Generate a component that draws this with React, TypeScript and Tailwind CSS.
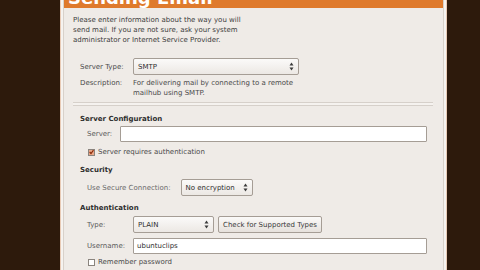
import React from "react";

const font = { fontFamily: '"DejaVu Sans", "Liberation Sans", sans-serif' };

function Spin() {
  return (
    <svg width="5" height="9" viewBox="0 0 5 9" className="shrink-0">
      <path d="M2.5 0.5 L4.5 3.5 L0.5 3.5 Z" fill="#3a3a3a" />
      <path d="M2.5 8.5 L4.5 5.5 L0.5 5.5 Z" fill="#3a3a3a" />
    </svg>
  );
}

function Combo({ value, w }: { value: string; w: string }) {
  return (
    <div className={`${w} h-[17px] flex items-center justify-between rounded-[2px] border border-[#a59d95] bg-gradient-to-b from-[#fbfaf9] to-[#ece8e4] pl-[4px] pr-[4px] text-[#2e2e2e]`}>
      <span>{value}</span>
      <Spin />
    </div>
  );
}

function Check({ checked, label }: { checked?: boolean; label: string }) {
  return (
    <div className="flex items-center gap-[3px] pl-[15px]">
      <div className={`w-[7px] h-[7px] border border-[#8a847e] flex items-center justify-center ${checked ? "bg-[#e9a98a]" : "bg-white"}`}>
        {checked && (
          <svg width="6" height="6" viewBox="0 0 6 6">
            <path d="M0.8 3 L2.4 4.8 L5.4 0.8" stroke="#8a2a0a" strokeWidth="1.4" fill="none" />
          </svg>
        )}
      </div>
      <span className="text-[#4a4a4a]">{label}</span>
    </div>
  );
}

export default function App() {
  return (
    <div className="w-[480px] h-[270px] overflow-hidden bg-[#2d1a0c] flex text-[7px] leading-[10px]" style={font}>
      <div className="ml-[60px] w-[387px] h-full border-x border-[#e9cbb6] bg-[#f6f3f0] px-[2px] flex">
        <div className="flex-1 border-x border-[#d8d1ca] bg-[#efebe7] flex flex-col">
          <div className="h-[8px] bg-[#df7a2c] overflow-hidden pl-[4px]">
            <div className="text-[18px] font-bold leading-[18px] text-white -mt-[11px]">Sending Email</div>
          </div>
          <div className="pl-[9px] pr-[8px] pt-[7px] text-[#3c3c3c]">
            <p>
              Please enter information about the way you will
              <br />
              send mail. If you are not sure, ask your system
              <br />
              administrator or Internet Service Provider.
            </p>

            <div className="mt-[13px] pl-[7px] grid grid-cols-[53px_1fr] items-center gap-y-[3px] text-[#4a4a4a]">
              <span>Server Type:</span>
              <Combo value="SMTP" w="w-[166px]" />
              <span className="self-start">Description:</span>
              <span>
                For delivering mail by connecting to a remote
                <br />
                mailhub using SMTP.
              </span>
            </div>

            <div className="mt-[4px] mr-[2px] h-[4px] border-y border-[#d6d0ca] bg-[#f5f2ef]" />

            <div className="mt-[8px] pl-[7px] font-bold text-[#2e2e2e]">Server Configuration</div>
            <div className="mt-[2px] pl-[14px] flex items-center gap-[8px] text-[#5a5a5a]">
              <span>Server:</span>
              <div className="flex-1 mr-[8px] h-[16px] border border-[#a59d95] bg-white rounded-[1px]" />
            </div>
            <div className="mt-[5px]">
              <Check checked label="Server requires authentication" />
            </div>

            <div className="mt-[8px] pl-[7px] font-bold text-[#2e2e2e]">Security</div>
            <div className="mt-[4px] pl-[14px] flex items-center gap-[10px] text-[#6a6a6a]">
              <span>Use Secure Connection:</span>
              <Combo value="No encryption" w="w-[72px]" />
            </div>

            <div className="mt-[7px] pl-[7px] font-bold text-[#2e2e2e]">Authentication</div>
            <div className="mt-[3px] pl-[14px] flex items-center text-[#5a5a5a]">
              <span className="w-[46px]">Type:</span>
              <Combo value="PLAIN" w="w-[81px]" />
              <div className="ml-[4px] h-[17px] px-[4px] flex items-center rounded-[2px] border border-[#a59d95] bg-gradient-to-b from-[#fbfaf9] to-[#e6e1dc] text-[#3a3a3a]">
                Check for Supported Types
              </div>
            </div>
            <div className="mt-[5px] pl-[14px] flex items-center text-[#5a5a5a]">
              <span className="w-[46px]">Username:</span>
              <div className="flex-1 mr-[8px] h-[16px] flex items-center pl-[3px] border border-[#a59d95] bg-white rounded-[1px] text-[#2e2e2e]">
                ubuntuclips
              </div>
            </div>
            <div className="mt-[3px]">
              <Check label="Remember password" />
            </div>
          </div>
        </div>
      </div>
    </div>
  );
}
